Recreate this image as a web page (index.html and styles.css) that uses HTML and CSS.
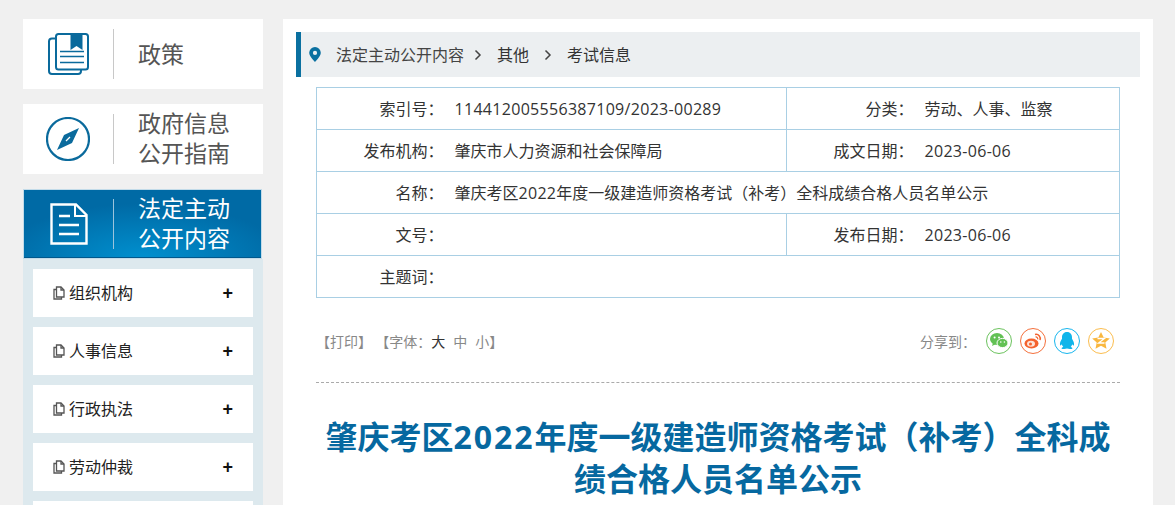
FILE: index.html
```html
<!DOCTYPE html>
<html lang="zh-CN">
<head>
<meta charset="utf-8">
<title>肇庆考区2022年度一级建造师资格考试（补考）全科成绩合格人员名单公示</title>
<link rel="stylesheet" href="styles.css">
</head>
<body>
<div class="page">
  <aside class="side">
    <a class="nav-card">
      <span class="nav-icon">
        <svg width="41" height="42" viewBox="0 0 41 42" fill="none" stroke="#0a6a9c" stroke-width="2"><path d="M7.500 5.500H4a3 3 0 0 0-3 3V38a3 3 0 0 0 3 3h26a3 3 0 0 0 3-3v-1.500"/><rect x="8" y="1" width="32" height="35.500" rx="2.500"/><path d="M22.500 1H34.500V17l-6-4-6 4z" fill="#0a6a9c" stroke="none"/><path d="M12 18.500h24M12 23.500h24M12 29.500h24" stroke-width="1.600"/></svg>
      </span>
      <span class="nav-label nav-single"><span class="nav-line">政策</span></span>
    </a>
    <a class="nav-card">
      <span class="nav-icon">
        <svg width="44" height="44" viewBox="0 0 44 44" fill="none"><circle cx="22" cy="22" r="21" stroke="#0a6a9c" stroke-width="2.200"/><path d="M33 11 26 26 11 33 18 18z" fill="#0a6a9c"/><path d="M20 24 24 20" stroke="#fff" stroke-width="1.200"/></svg>
      </span>
      <span class="nav-label"><span class="nav-line">政府信息</span><span class="nav-line">公开指南</span></span>
    </a>
    <a class="nav-card nav-active">
      <span class="nav-icon">
        <svg width="38" height="42" viewBox="0 0 38 42" fill="none" stroke="#fff" stroke-width="2.400"><path d="M1.500 1.500H26L36.500 12v28.500H1.500z"/><path d="M25 1.500V13h11.500" stroke-width="2"/><path d="M9 13h11M9 22h20M9 31h20" stroke-width="2.600"/></svg>
      </span>
      <span class="nav-label"><span class="nav-line">法定主动</span><span class="nav-line">公开内容</span></span>
    </a>
    <ul class="sub">
      <li class="sub-item"><svg class="doc" width="12" height="14" viewBox="0 0 12 14" fill="none" stroke="#555" stroke-width="1.300"><path d="M3.500 1h4.500l3 3v7h-7.500z"/><path d="M8 1v3h3"/><path d="M3.500 3.500H1v9.500h7.500v-2"/></svg><span class="sub-text">组织机构</span><span class="plus">+</span></li>
      <li class="sub-item"><svg class="doc" width="12" height="14" viewBox="0 0 12 14" fill="none" stroke="#555" stroke-width="1.300"><path d="M3.500 1h4.500l3 3v7h-7.500z"/><path d="M8 1v3h3"/><path d="M3.500 3.500H1v9.500h7.500v-2"/></svg><span class="sub-text">人事信息</span><span class="plus">+</span></li>
      <li class="sub-item"><svg class="doc" width="12" height="14" viewBox="0 0 12 14" fill="none" stroke="#555" stroke-width="1.300"><path d="M3.500 1h4.500l3 3v7h-7.500z"/><path d="M8 1v3h3"/><path d="M3.500 3.500H1v9.500h7.500v-2"/></svg><span class="sub-text">行政执法</span><span class="plus">+</span></li>
      <li class="sub-item"><svg class="doc" width="12" height="14" viewBox="0 0 12 14" fill="none" stroke="#555" stroke-width="1.300"><path d="M3.500 1h4.500l3 3v7h-7.500z"/><path d="M8 1v3h3"/><path d="M3.500 3.500H1v9.500h7.500v-2"/></svg><span class="sub-text">劳动仲裁</span><span class="plus">+</span></li>
      <li class="sub-item"></li>
    </ul>
  </aside>
  <main class="main">
    <nav class="crumb">
      <svg class="pin" width="12" height="15" viewBox="0 0 12 15"><path fill-rule="evenodd" d="M6 0a5.800 5.800 0 0 1 5.800 5.800C11.800 9.500 6 15 6 15S.2 9.500.2 5.800A5.800 5.800 0 0 1 6 0zm0 3.800a2.100 2.100 0 1 0 0 4.200 2.100 2.100 0 0 0 0-4.200z" fill="#0a70a0"/></svg>
      <span class="crumb-a">法定主动公开内容</span>
      <svg class="chev" width="8" height="12" viewBox="0 0 8 12" fill="none" stroke="#444" stroke-width="1.500"><path d="M1.500 1.500 6 6l-4.500 4.500"/></svg>
      <span class="crumb-b">其他</span>
      <svg class="chev chev-2" width="8" height="12" viewBox="0 0 8 12" fill="none" stroke="#444" stroke-width="1.500"><path d="M1.500 1.500 6 6l-4.500 4.500"/></svg>
      <span class="crumb-c">考试信息</span>
    </nav>
    <div class="article">
      <table class="meta">
        <colgroup><col class="c1"><col class="c2"><col class="c3"><col class="c4"></colgroup>
        <tr><th>索引号：</th><td><span class="num">114412005556387109/2023-00289</span></td><th>分类：</th><td>劳动、人事、监察</td></tr>
        <tr><th>发布机构：</th><td>肇庆市人力资源和社会保障局</td><th>成文日期：</th><td><span class="num">2023-06-06</span></td></tr>
        <tr><th>名称：</th><td colspan="3">肇庆考区<span class="num">2022</span>年度一级建造师资格考试（补考）全科成绩合格人员名单公示</td></tr>
        <tr><th>文号：</th><td></td><th>发布日期：</th><td><span class="num">2023-06-06</span></td></tr>
        <tr><th>主题词：</th><td colspan="3"></td></tr>
      </table>
      <div class="tools">
        <div class="font-tools">【打印】 【字体：<span class="big">大</span><span class="fs">中</span><span class="fs-last">小</span>】</div>
        <div class="share">
          <span class="share-label">分享到：</span>
          <span class="share-btn wx"><svg width="18" height="16" viewBox="0 0 18 16"><ellipse cx="7" cy="6" rx="7" ry="6" fill="#62c154"/><path d="M3 10l-1 3 4-2z" fill="#62c154"/><ellipse cx="12.500" cy="10" rx="5.500" ry="4.600" fill="#62c154" stroke="#fff"/><circle cx="4.600" cy="4.500" r="1" fill="#fff"/><circle cx="9" cy="4.500" r="1" fill="#fff"/><circle cx="10.800" cy="9" r=".8" fill="#fff"/><circle cx="14.400" cy="9" r=".8" fill="#fff"/></svg></span>
          <span class="share-btn wb"><svg width="18" height="16" viewBox="0 0 18 16" fill="none"><ellipse cx="7.500" cy="10.500" rx="7" ry="5" fill="#f4632e"/><ellipse cx="7" cy="10.800" rx="4" ry="3" fill="#fde3d8"/><circle cx="6.500" cy="11" r="1.500" fill="#f4632e"/><path d="M11 1.500c3.500-.8 6 2 5 5.500" stroke="#f4632e" stroke-width="1.500"/><path d="M11.500 4c1.500-.3 2.500 1 2.200 2.300" stroke="#f4632e" stroke-width="1.200"/></svg></span>
          <span class="share-btn qq"><svg width="16" height="18" viewBox="0 0 16 18"><path d="M8 0c3.400 0 5 2.600 5 5.400v1.400c1.200 1.800 2.400 4 2 6.300-.2.800-1 .3-1.800-.9-.2 1.200-.8 2.100-1.500 2.700 1.200.4 1.900.9 1.700 1.500-.3.700-3.700.8-5.400.2-1.700.6-5.100.5-5.400-.2-.2-.6.500-1.100 1.700-1.500-.7-.6-1.300-1.500-1.500-2.700-.8 1.200-1.600 1.700-1.800.9-.4-2.300.8-4.500 2-6.300V5.400C3 2.600 4.600 0 8 0z" fill="#10b5ea"/></svg></span>
          <span class="share-btn qz"><svg width="18" height="17" viewBox="0 0 18 17"><path d="M9 0l2.700 5.600 6.100.8-4.500 4.200 1.200 6.100L9 13.700l-5.500 3 1.200-6.100L.2 6.400l6.100-.8z" fill="#f9b73f"/><path d="M5.500 6.500h7l-6 4.500h6" fill="none" stroke="#fff" stroke-width="1.300"/></svg></span>
        </div>
      </div>
      <h1 class="title">肇庆考区<span class="title-num">2022</span>年度一级建造师资格考试（补考）全科成绩合格人员名单公示</h1>
    </div>
  </main>
</div>
</body>
</html>
```
FILE: styles.css
```css
* { box-sizing: border-box; }
html, body { margin: 0; height: 505px; overflow: hidden; }
body {
  background: #f0f0f0;
  font-family: "Noto Sans CJK SC", "Liberation Sans", sans-serif;
  color: #333;
}
.page { display: flex; align-items: flex-start; gap: 20px; height: 505px; overflow: hidden; padding: 19px 22px 0 23px; }
.side { width: 240px; flex: none; }
.nav-card {
  display: flex;
  align-items: center;
  height: 70px;
  background: #fff;
  margin-bottom: 15px;
  color: #555;
}
.nav-icon { width: 91px; height: 50px; display: flex; align-items: center; justify-content: center; border-right: 1px solid #c8c8c8; margin-right: 24px; }
.nav-label { display: block; font-size: 23px; padding-bottom: 4px; }
.nav-single { padding-bottom: 2px; }
.nav-line { display: block; height: 30px; line-height: 30px; }
.nav-active {
  width: 239px;
  margin-bottom: 0;
  color: #fff;
  border: 1px solid #c2dbe9;
  background: radial-gradient(ellipse 60% 80% at 50% 100%, #0090cf 0%, #006aa5 100%);
  box-shadow: inset 0 -1px 0 #00588c;
}
.nav-active .nav-icon { border-right-color: #9cc4dc; width: 90px; }
.sub { list-style: none; margin: 0; padding: 10px; background: #dde9ee; }
.sub-item {
  display: flex;
  align-items: center;
  height: 48px;
  margin-bottom: 10px;
  padding: 0 20px;
  background: #fff;
  font-size: 16px;
  line-height: 20px;
  color: #222;
}
.doc { flex: none; margin-right: 4px; }
.sub-text { flex: 1; padding-bottom: 2px; }
.plus { font-size: 18px; font-weight: 700; color: #111; font-family: "Liberation Sans", sans-serif; }
.main { width: 870px; height: 600px; background: #fff; padding: 13px; flex: none; }
.crumb {
  display: flex;
  align-items: center;
  height: 45px;
  background: #eceff1;
  border-left: 5px solid #0a70a0;
  padding-left: 8px;
  font-size: 16px;
  line-height: 22px;
  color: #333;
}
.crumb span { padding-bottom: 2px; }
.crumb-a { color: #444; }
.pin { margin-right: 15px; }
.chev { margin: 0 15px 0 10px; }
.chev-2 { margin: 0 15px; }
.article { padding: 10px 20px 0; }
.meta { width: 804px; table-layout: fixed; border-collapse: collapse; font-size: 16px; color: #333; }
.c1 { width: 130px; } .c2 { width: 340px; } .c3 { width: 130px; }
.meta th, .meta td { height: 42px; padding: 0 0 2px; border-top: 1px solid #a9cfe4; border-bottom: 1px solid #a9cfe4; font-weight: 400; }
.meta th { text-align: right; padding-right: 3px; }
.meta td { padding-left: 8px; }
.meta tr > :first-child { border-left: 1px solid #a9cfe4; }
.meta tr > :last-child { border-right: 1px solid #a9cfe4; }
.meta tr > td:nth-child(2):not([colspan]) { border-right: 1px solid #a9cfe4; }
.num { font-family: "Open Sans", "Noto Sans CJK SC", sans-serif; letter-spacing: .3px; }
.tools {
  display: flex;
  justify-content: space-between;
  align-items: center;
  height: 85px;
  border-bottom: 1px dashed #aaa;
  padding: 1px 6px 0 0;
  font-size: 14px;
  color: #888;
}
.big { color: #333; margin-right: 8px; }
.fs { margin-right: 8px; }
.font-tools { white-space: pre; }
.share { display: flex; align-items: center; gap: 8px; }
.share-label { margin-right: 2px; }
.share-btn { width: 26px; height: 26px; border-radius: 50%; border: 1px solid; display: flex; align-items: center; justify-content: center; }
.wx { border-color: #6cc35e; }
.wb { border-color: #f4703c; }
.qq { border-color: #17b6ee; }
.qz { border-color: #fbbd4e; }
.title { margin: 32px 0 0; text-align: center; font-size: 32px; line-height: 41px; font-weight: 700; color: #0668a0; }
.title-num { font-family: "Open Sans", "Noto Sans CJK SC", sans-serif; letter-spacing: 2px; }
```
